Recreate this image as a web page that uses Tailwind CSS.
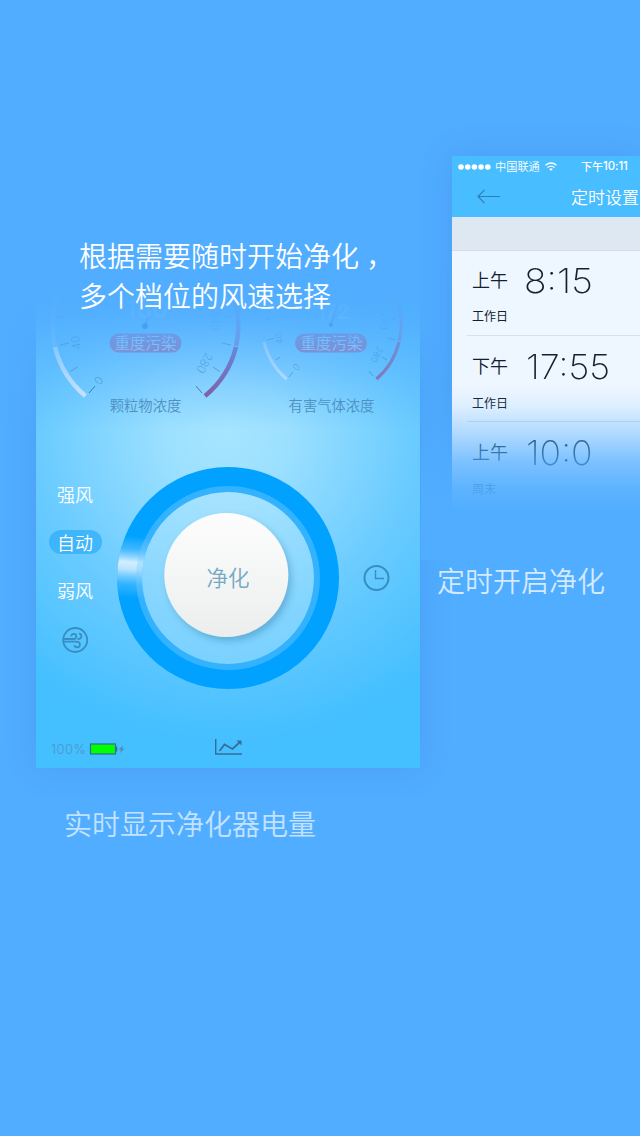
<!DOCTYPE html>
<html lang="zh-CN">
<head>
<meta charset="utf-8">
<title>净化器</title>
<script src="https://cdn.jsdelivr.net/npm/@tailwindcss/browser@4"></script>
</head>
<body class="bg-[#50adff]">
<main class="relative w-[640px] h-[1136px] overflow-hidden bg-[#50adff] font-['Noto_Sans_CJK_SC',sans-serif] font-[350] whitespace-nowrap">

  <!-- Purifier control screen -->
  <section class="absolute left-9 top-[268px] w-[384px] h-[500px] flex flex-col shadow-[0_0_28px_rgba(60,110,210,0.22)] bg-[radial-gradient(circle_at_190px_165px,#a6e5ff_0px,#9ce0ff_60px,#69cbff_190px,#44bfff_310px)]">
    <svg class="block shrink-0" width="384" height="160" viewBox="36 268 384 160" fill="none">
      <g stroke-width="4.5">
        <path d="M85.5 396A93 93 0 0 1 55 347" stroke="#e9f2ff"/>
        <path d="M55 346A93 93 0 0 1 60 290" stroke="#8fd0ff"/>
        <path d="M205 396A93 93 0 0 0 236 347" stroke="#8d4a91"/>
        <path d="M236 346A93 93 0 0 0 231 290" stroke="#9d7fbc"/>
      </g>
      <g stroke-width="3.2">
        <path d="M286.500 379A70 70 0 0 1 264 342" stroke="#e9f2ff"/>
        <path d="M264 341A70 70 0 0 1 268 295" stroke="#8fd0ff"/>
        <path d="M376.500 379A70 70 0 0 0 399 342" stroke="#a05a92"/>
        <path d="M399 341A70 70 0 0 0 395 295" stroke="#9d7fbc"/>
      </g>
      <g stroke="#274d68" stroke-width="1">
        <path d="M89 393l6-7M202 393l-6-7" opacity=".8"/>
        <path d="M70.500 371.500l7-4.500M60 345l9-2M58 317h8M220 371.500l-7-4.500M231 345l-9-2M232 317h-8" opacity=".5"/>
        <path d="M289 377l4-5M275.500 360l5-3M267 340l7-2M266 319h5M373 376l-4-5M387 360l-5-3M395 340l-7-2M396 319h-5" opacity=".5"/>
      </g>
      <g fill="#3c7fab" font-family="Inter,sans-serif" font-weight="200" font-size="11.500" text-anchor="middle">
        <text transform="translate(102 383) rotate(-52)">0</text>
        <text transform="translate(80 342) rotate(-100)">40</text>
        <text transform="translate(201 361) rotate(118)">280</text>
        <text transform="translate(212 320) rotate(96)" opacity=".8">240</text>
        <g font-size="9">
          <text transform="translate(299 369) rotate(-52)">0</text>
          <text transform="translate(282 338) rotate(-100)">40</text>
          <text transform="translate(374 353) rotate(118)">280</text>
          <text transform="translate(381 321) rotate(96)">240</text>
        </g>
      </g>
      <path d="M145 326l9-26M331 325l7-22" stroke="#c03058"/>
      <circle cx="145" cy="326" r="3" fill="#0070d0"/><circle cx="331" cy="325" r="2" fill="#0070d0"/>
      <g fill="#d4efff" font-family="Inter,sans-serif" font-weight="500" text-anchor="middle">
        <text x="147" y="318" font-size="25">160</text>
        <text x="333" y="319" font-size="20">172</text>
      </g>
      <rect x="109.500" y="333.500" width="72" height="19" rx="9.500" fill="#b66a9f"/>
      <rect x="295" y="333.500" width="72" height="19" rx="9.500" fill="#b66a9f"/>
      <g fill="#c4e2ff" font-size="15.500" text-anchor="middle">
        <text x="145.500" y="348.500">重度污染</text><text x="331.500" y="348.500">重度污染</text>
      </g>
      <g fill="#4c8bb2" font-size="14.300" text-anchor="middle">
        <text x="145.500" y="411">颗粒物浓度</text><text x="331.500" y="411">有害气体浓度</text>
      </g>
    </svg>

    <div class="flex h-[290px] shrink-0">
      <div class="flex w-[78px] flex-col items-center pt-[54px] text-[18px] leading-6 text-white">
        <span>强风</span>
        <span class="mt-6 flex h-6 w-[53px] items-center justify-center rounded-full bg-[#37b2fa]/85">自动</span>
        <span class="mt-6">弱风</span>
        <svg class="mt-[24px]" width="28" height="28" viewBox="0 0 28 28" fill="none" stroke="#378ebf" stroke-width="1.800">
          <circle cx="14.200" cy="14" r="12"/>
          <path d="M2.500 13H12.300c2 0 3-1.300 3-2.800 0-1.300-1-2.300-2.400-2.300-1.500 0-2.500.9-2.600 2.300M2.500 15.700h12.700c2.300 0 3.700 1.200 3.700 2.800s-1.300 2.800-2.900 2.800c-1.400 0-2.400-.9-2.500-2.200M16.500 13c2.300 0 3.900-1.300 3.900-3 0-1.300-.9-2.200-2.400-2.300"/>
        </svg>
      </div>
      <svg class="mt-[30px]" width="230" height="240" viewBox="114 458 230 240">
        <defs>
          <linearGradient id="disc" x2="0" y2="1"><stop stop-color="#fdfdfd"/><stop offset="1" stop-color="#eceeee"/></linearGradient>
          <linearGradient id="glow" x2="0" y2="1"><stop stop-color="#bfe7ff" stop-opacity="0"/><stop offset=".2" stop-color="#a8deff" stop-opacity=".35"/><stop offset=".42" stop-color="#e2f4ff" stop-opacity=".93"/><stop offset=".54" stop-color="#d8f0ff" stop-opacity=".85"/><stop offset=".78" stop-color="#a8deff" stop-opacity=".3"/><stop offset="1" stop-color="#bfe7ff" stop-opacity="0"/></linearGradient>
          <clipPath id="ring"><path clip-rule="evenodd" d="M117 578a111 111 0 1 0 222 0a111 111 0 1 0-222 0M142 578a86 86 0 1 0 172 0a86 86 0 1 0-172 0"/></clipPath>
          <filter id="shade" x="-20%" y="-20%" width="150%" height="150%"><feDropShadow dx="3" dy="4" stdDeviation="3.500" flood-color="#2570a0" flood-opacity=".38"/></filter>
        </defs>
        <circle cx="228" cy="578" r="86" fill="#c0ebff" fill-opacity=".3"/>
        <circle cx="228" cy="578" r="101" fill="none" stroke="#00a1ff" stroke-width="20"/>
        <circle cx="228" cy="578" r="89" fill="none" stroke="#34b2ff" stroke-width="6"/>
        <g clip-path="url(#ring)"><rect x="112" y="536" width="42" height="62" fill="url(#glow)" transform="rotate(4 130 566)"/><circle cx="228" cy="578" r="89" fill="none" stroke="#34b2ff" stroke-width="6" opacity=".22"/></g>
        <circle cx="226.300" cy="575" r="62" fill="url(#disc)" filter="url(#shade)"/>
        <text x="228" y="585.500" font-size="21.500" text-anchor="middle" fill="#74a9c3">净化</text>
      </svg>
      <svg class="ml-[18px] mt-[136px]" width="28" height="28" viewBox="0 0 28 28" fill="none" stroke="#378ebf">
        <circle cx="14.500" cy="14" r="12" stroke-width="2"/><path d="M13.500 6v8.500h8.500" stroke-width="1.400"/>
      </svg>
    </div>

    <div class="flex h-[50px] items-center pl-[15px] pt-[12px]">
      <span class="w-[38px] font-['Inter',sans-serif] text-[13px] tracking-[0.4px] leading-4 font-light text-[#4c96c6]">100%</span>
      <svg width="38" height="14" viewBox="0 0 38 14">
        <rect x="1.500" y="2" width="25" height="10" fill="#00ff00" stroke="#356e98" stroke-width="1.200"/><path d="M27.500 4.500v5" stroke="#356e98" stroke-width="1.500"/>
        <path d="M34 3.500l-4.500 4h2.500l-1 3.500 4.500-4.500h-2.500z" fill="#5d86a3"/>
      </svg>
      <svg class="ml-[87px] -mt-1" width="30" height="18" viewBox="0 0 30 18" fill="none" stroke="#356f98" stroke-width="1.400">
        <path d="M1.700 1v15H28"/><path d="M5.500 13l5-6.500 8 4.500L26 4" stroke-width="1.800"/><path d="M22.500 2.500H27.500v5z" fill="#356f98" stroke="none"/>
      </svg>
    </div>
  </section>
  <!-- Upper fade -->
  <div class="absolute left-0 top-[230px] h-[200px] w-[446px] bg-[linear-gradient(to_bottom,#50adff_0%,#50adff_30%,rgb(80_173_255/0.9)_43%,rgb(80_173_255/0.6)_60%,rgb(80_173_255/0.28)_80%,transparent)]"></div>

  <!-- Timer screen -->
  <section class="absolute left-[452px] top-[156px] h-[360px] w-[188px] overflow-visible bg-[#eef6ff] text-[#14202c] shadow-[0_0_28px_rgba(60,110,210,0.25)]">
    <header class="h-[61px] bg-[#48bdff] text-white">
      <div class="flex h-[21px] items-center pl-[6px] text-[11px] leading-none">
        <svg width="33" height="6" viewBox="0 0 33 6" fill="#fff"><circle cx="3" cy="3" r="2.800"/><circle cx="9.700" cy="3" r="2.800"/><circle cx="16.400" cy="3" r="2.800"/><circle cx="23.100" cy="3" r="2.800"/><circle cx="29.800" cy="3" r="2.800"/></svg>
        <span class="ml-1 w-[46px] text-[11.2px]">中国联通</span>
        <svg class="ml-1" width="12" height="9" viewBox="0 0 12 9" fill="none" stroke="#fff" stroke-width="1.400"><path d="M.5 3.200q5.500-4.400 11 0M2.500 5.500q3.500-2.800 7 0"/><path d="M4.200 7Q6 5.700 7.800 7L6 9z" fill="#fff" stroke="none"/></svg>
        <span class="ml-[24px] flex items-center font-medium">下午<span class="font-['Inter',sans-serif] text-[11.5px] tracking-[-0.1px]">10:11</span></span>
      </div>
      <div class="flex h-[38px] items-center pl-[25px]">
        <svg width="23" height="15" viewBox="0 0 23 15" fill="none" stroke="#2d7eb0" stroke-width="1.100"><path d="M7.500.8L1 7.500l6.500 6.700M1 7.500h22"/></svg>
        <span class="ml-[71px] text-[17px] leading-none">定时设置</span>
      </div>
    </header>
    <div class="h-[34px] border-b border-[#d3dce7] bg-[#dee8f3]"></div>
    <div class="ml-[15px] h-[85px] border-b border-[#d8e1ec] pl-[5px]">
      <div class="flex h-[58px] items-center"><span class="-mt-0.5 w-[52px] text-[18px]">上午</span><span class="mt-0.5 origin-left scale-x-[1.1] font-['Inter',sans-serif] text-[34px] leading-none font-extralight">8:15</span></div>
      <div class="text-[12px] leading-[14px] font-normal">工作日</div>
    </div>
    <div class="ml-[15px] h-[86px] border-b border-[#d3dce8] pl-[5px]">
      <div class="flex h-[58px] items-center"><span class="w-[54px] text-[18px]">下午</span><span class="mt-[3px] origin-left scale-x-[1.06] font-['Inter',sans-serif] text-[34px] leading-none font-extralight">17:55</span></div>
      <div class="pt-0.5 text-[12px] leading-[14px] font-normal">工作日</div>
    </div>
    <div class="ml-[15px] pl-[5px]">
      <div class="flex h-[58px] items-center"><span class="w-[54px] text-[18px]">上午</span><span class="mt-[3px] origin-left scale-x-[1.05] font-['Inter',sans-serif] text-[34px] leading-none font-extralight">10:0</span></div>
      <div class="pt-0.5 text-[12px] leading-[14px] font-normal">周末</div>
    </div>
  </section>
  <!-- Lower fade -->
  <div class="absolute left-[421px] top-[385px] h-[175px] w-[219px] bg-[linear-gradient(to_bottom,transparent,rgb(80_173_255/0.1)_12%,rgb(80_173_255/0.4)_28%,rgb(80_173_255/0.72)_44%,rgb(80_173_255/0.9)_58%,#50adff_72%)]"></div>

  <!-- Captions over the screens -->
  <h1 class="absolute left-[79px] top-[235px] text-[28px] leading-[40px] text-white">根据需要随时开始净化<span class="inline-block translate-x-[7px]">，</span><br>多个档位的风速选择</h1>
  <p class="absolute left-[437px] top-[560px] text-[28px] leading-[40px] text-white/75">定时开启净化</p>
  <p class="absolute left-[64px] top-[803px] text-[28px] leading-[40px] text-white/65">实时显示净化器电量</p>
</main>
</body>
</html>
